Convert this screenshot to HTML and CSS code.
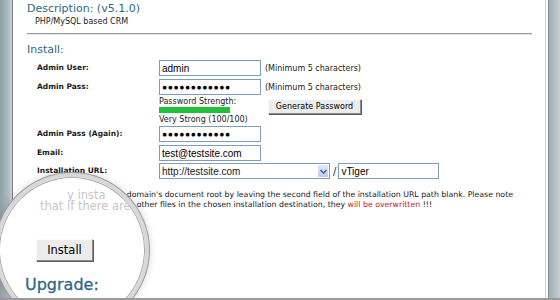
FILE: index.html
```html
<!DOCTYPE html>
<html>
    <head>
        <meta charset="utf-8">
        <title>vtiger CRM - Install</title>
        <link rel="stylesheet" href="styles.css">
    </head>
    <body>
        <div class="window">
            <div class="frame-left"></div>
            <section class="page">
                <h1 class="section-title">Description: (v5.1.0)</h1>
                <p class="description">PHP/MySQL based CRM</p>
                <hr class="divider">
                <h1 class="section-title">Install:</h1>
                <form class="install-form">
                    <label class="form-label">Admin User:</label>
                    <div class="field">
                        <input class="text-input" type="text" value="admin">
                        <span class="hint">(Minimum 5 characters)</span>
                    </div>

                    <label class="form-label">Admin Pass:</label>
                    <div class="field">
                        <input class="text-input secret" type="text" value="●●●●●●●●●●●●">
                        <span class="hint">(Minimum 5 characters)</span>
                    </div>

                    <span></span>
                    <div class="field strength-row">
                        <div class="strength">
                            <span class="strength-text">Password Strength:</span>
                            <div class="strength-bar"></div>
                            <span class="strength-text strength-value">Very Strong (100/100)</span>
                        </div>
                        <button type="button" class="btn btn-small">Generate Password</button>
                    </div>

                    <label class="form-label">Admin Pass (Again):</label>
                    <div class="field">
                        <input class="text-input secret" type="text" value="●●●●●●●●●●●●">
                    </div>

                    <label class="form-label">Email:</label>
                    <div class="field">
                        <input class="text-input" type="text" value="test@testsite.com">
                    </div>

                    <label class="form-label">Installation URL:</label>
                    <div class="field">
                        <div class="select">
                            <span class="select-value">http://testsite.com</span>
                            <span class="select-arrow">
                                <svg width="9" height="9" viewBox="0 0 9 9"><path d="M1.5 3 L4.5 6 L7.5 3" fill="none" stroke="#4d6a9c" stroke-width="1.6"/></svg>
                            </span>
                        </div>
                        <span class="slash">/</span>
                        <input class="text-input path-input" type="text" value="vTiger">
                    </div>
                </form>
                <p class="note">You may install in domain's document root by leaving the second field of the installation URL path blank. Please note<br>that if there are any other files in the chosen installation destination, they <span class="warn">will be overwritten</span> !!!</p>
                <div class="actions">
                    <button type="button" class="btn">Install</button>
                </div>
                <h1 class="section-title">Upgrade:</h1>
            </section>
            <div class="frame-right"></div>

            <!-- magnifying glass over the install button -->
            <div class="lens">
                <div class="lens-view">
                    <p class="lens-text lens-line-1">y insta</p>
                    <p class="lens-text lens-line-2">that if there are</p>
                    <button type="button" class="btn lens-btn">Install</button>
                    <h1 class="lens-title">Upgrade:</h1>
                </div>
            </div>
        </div>
    </body>
</html>
```

FILE: styles.css
```css
html, body {
    margin: 0;
    height: 100%;
    overflow: hidden;
}

body {
    font-family: "DejaVu Sans", Verdana, sans-serif;
    background-color: white;
    color: #1a1a1a;
}

.window {
    position: relative;
    display: flex;
    height: 298px;
    border-bottom: 2px solid #9a9a9a;
    overflow: hidden;
}

.frame-left {
    width: 12px;
    background: linear-gradient(to right, #8f9fa8, #aebcc3 70%, #c9d2d6);
}

.frame-right {
    width: 11px;
    margin-left: 2px;
    border-left: 1px solid #8c8c8c;
    background: linear-gradient(to right, #9fb0b8, #b3c1c7 60%, #c5d0d4);
}

.page {
    flex: 1;
    border-left: 1px solid #7e7e7e;
    border-right: 1px solid #d2d2d2;
    padding: 2px 13px 0 14px;
    overflow: hidden;
}

.section-title {
    margin: 0;
    font-size: 11px;
    line-height: 14px;
    font-weight: normal;
    color: #2d6785;
}

.description {
    margin: 1px 0 0 8px;
    font-size: 8px;
    line-height: 10px;
}

.divider {
    margin: 6px 0 8px 0;
    border: none;
    border-top: 1px solid #9c9c9c;
    border-bottom: 1px solid #e2e2e2;
    height: 0;
}

.install-form {
    margin: 3px 0 0 10px;
    display: grid;
    grid-template-columns: 122px auto;
    grid-template-rows: 19px 18px 29px 19px 18px 17px;
    align-items: start;
}

.form-label {
    font-size: 7.5px;
    font-weight: bold;
    line-height: 16px;
    white-space: nowrap;
}

.field {
    display: flex;
    align-items: center;
}

.text-input {
    width: 102px;
    height: 16px;
    box-sizing: border-box;
    margin: 0;
    padding: 0 0 0 2px;
    border: 1px solid #7f9db9;
    font-family: "Liberation Sans", Arial, sans-serif;
    font-size: 10px;
    color: black;
    outline: none;
}

.secret {
    font-size: 8.5px;
    letter-spacing: 0.6px;
}

.hint {
    margin-left: 4px;
    font-size: 8px;
}

.strength-row {
    align-items: flex-start;
}

.strength {
    width: 109px;
    display: flex;
    flex-direction: column;
}

.strength-text {
    font-size: 8px;
    line-height: 9px;
    white-space: nowrap;
}

.strength-value {
    margin-top: 2px;
    line-height: 10px;
}

.strength-bar {
    margin-top: 1px;
    width: 71px;
    height: 6px;
    background-color: #21bf3a;
}

.btn {
    font-family: "DejaVu Sans", Verdana, sans-serif;
    background-color: #ececec;
    border: 1px solid;
    border-color: #fbfbfb #8a8a8a #8a8a8a #fbfbfb;
    box-shadow: 1px 1px 0 #5c5c5c;
    color: black;
    padding: 0;
    cursor: pointer;
}

.btn-small {
    margin-top: 2px;
    width: 93px;
    height: 15px;
    font-size: 8px;
}

.select {
    width: 171px;
    height: 16px;
    box-sizing: border-box;
    border: 1px solid #7f9db9;
    display: flex;
    align-items: center;
    justify-content: space-between;
    padding: 0 1px 0 2px;
}

.select-value {
    font-family: "Liberation Sans", Arial, sans-serif;
    font-size: 10px;
}

.select-arrow {
    width: 10px;
    height: 12px;
    background: linear-gradient(#dfe9fb, #bccdf0);
    border-radius: 1px;
    display: flex;
    align-items: center;
    justify-content: center;
}

.slash {
    margin: 0 2px 0 3px;
    font-size: 10px;
}

.path-input {
    width: 101px;
}

.note {
    margin: 10px 0 0 29px;
    font-size: 7.8px;
    line-height: 10px;
    white-space: nowrap;
}

.warn {
    color: #b3262b;
}

.actions {
    margin: 14px 0 8px 10px;
}

.actions .btn {
    width: 40px;
    height: 15px;
    font-size: 8px;
}

.lens {
    position: absolute;
    left: -5px;
    top: 173px;
    width: 154px;
    height: 154px;
    box-sizing: border-box;
    border-radius: 50%;
    border: 4px solid #d8d8d8;
    background-color: white;
    box-shadow: 0 0 0 1px #9c9c9c, inset 0 0 0 1px #a8a8a8, 0 0 6px 2px rgba(0, 0, 0, 0.12);
    overflow: hidden;
}

.lens-view {
    padding: 13px 0 0 0;
    display: flex;
    flex-direction: column;
    align-items: flex-start;
}

.lens-text {
    margin: 0;
    font-size: 11.5px;
    line-height: 11px;
    color: #c6c6c6;
    white-space: nowrap;
}

.lens-line-1 {
    margin-left: 68px;
}

.lens-line-2 {
    margin-left: 41px;
}

.lens-btn {
    margin: 27px 0 0 37px;
    width: 57px;
    height: 22px;
    font-size: 11.5px;
}

.lens-title {
    margin: 15px 0 0 26px;
    font-size: 16px;
    line-height: 18px;
    font-weight: normal;
    color: #2d6785;
    -webkit-text-stroke: 0.3px #2d6785;
}
```
